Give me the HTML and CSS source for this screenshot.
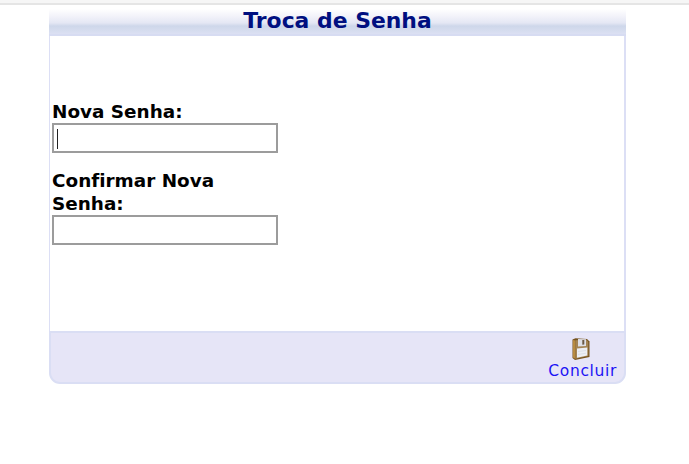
FILE: index.html
```html
<!DOCTYPE html>
<html lang="pt-BR">
<head>
<meta charset="utf-8">
<title>Troca de Senha</title>
<link rel="stylesheet" href="styles.css">
</head>
<body>
<div class="topbar"></div>
<form class="panel">
  <h1 class="title">Troca de Senha</h1>
  <div class="fields">
    <label class="label" for="nova">Nova Senha:</label>
    <div class="input" id="nova"><span class="caret"></span></div>
    <label class="label second" for="confirmar">Confirmar Nova<br>Senha:</label>
    <div class="input" id="confirmar"></div>
  </div>
  <div class="footer">
    <a class="action">
      <svg class="icon" width="20" height="24" viewBox="0 0 20 24">
        <path d="M1.5 2.5 4.5 1.2 16 2 18.5 4.5 18.5 20 4 23 1.5 21z" fill="#76531f"/>
        <path d="M2 3 4.5 3.5 4.5 22 2 20.5z" fill="#b88b42"/>
        <path d="M4.5 3.2 15.5 2.7 17.3 5 17.3 19 4.5 21.8z" fill="#a48455"/>
        <path d="M7 2 15 2.3 15 9 7 9.5z" fill="#dedfe6"/>
        <path d="M11.3 3 13.3 3 13.3 7.5 11.3 7.7z" fill="#6b5945"/>
        <path d="M6 11.5 16.3 10.5 16.3 18.5 6 20.8z" fill="#eceef4"/>
        <path d="M7 14.5 15 13.5M7 17.5 15 16.2" stroke="#dce0e9" stroke-width="1"/>
      </svg>
      <span class="action-text">Concluir</span>
    </a>
  </div>
</form>
</body>
</html>
```
FILE: styles.css
```css
* { box-sizing: border-box; }
body {
  margin: 0;
  background: #fff;
  font-family: Verdana, "DejaVu Sans", sans-serif;
  font-variant-ligatures: none;
}
.topbar {
  height: 5px;
  background: #f6f6f6;
  border-bottom: 2px solid #e5e5e5;
}
.panel {
  width: 577px;
  margin: 0 0 0 49px;
}
.title {
  height: 31px;
  margin: 0;
  padding-top: 1px;
  border-bottom: 2px solid #d7dcf2;
  background: linear-gradient(#fff 0, #fff 4px, #f3f3fa 11px, #e4e7f4 18px, #ced7ea 21px, #d6ddef 26px, #dce0f3 29px);
  color: #000f80;
  font-size: 21.9px;
  line-height: 29px;
  text-align: center;
}
.fields {
  height: 295px;
  padding: 64px 0 0 1px;
  border: solid #dcdff5;
  border-width: 0 2px 0 1px;
  padding-left: 2px;
}
.label {
  display: block;
  color: #000;
  font-size: 18.4px;
  font-weight: bold;
  line-height: 23px;
}
.second { margin-top: 16px; }
.input {
  width: 226px;
  height: 30px;
  padding: 4px;
  border: 2px solid #9c9c9c;
  background: #fff;
}
.caret {
  display: block;
  width: 1px;
  height: 20px;
  margin-left: -1px;
  background: #222;
}
.footer {
  display: flex;
  justify-content: flex-end;
  height: 53px;
  padding: 4px 7px 0 0;
  border: 2px solid #dadef4;
  border-radius: 0 0 11px 11px;
  background: #e6e5f7;
}
.action {
  display: flex;
  flex-direction: column;
  align-items: center;
  color: #1c13f5;
}
.icon { display: block; margin-right: 4px; }
.action-text {
  font-size: 15.5px;
  letter-spacing: .65px;
  line-height: 21px;
}
```
